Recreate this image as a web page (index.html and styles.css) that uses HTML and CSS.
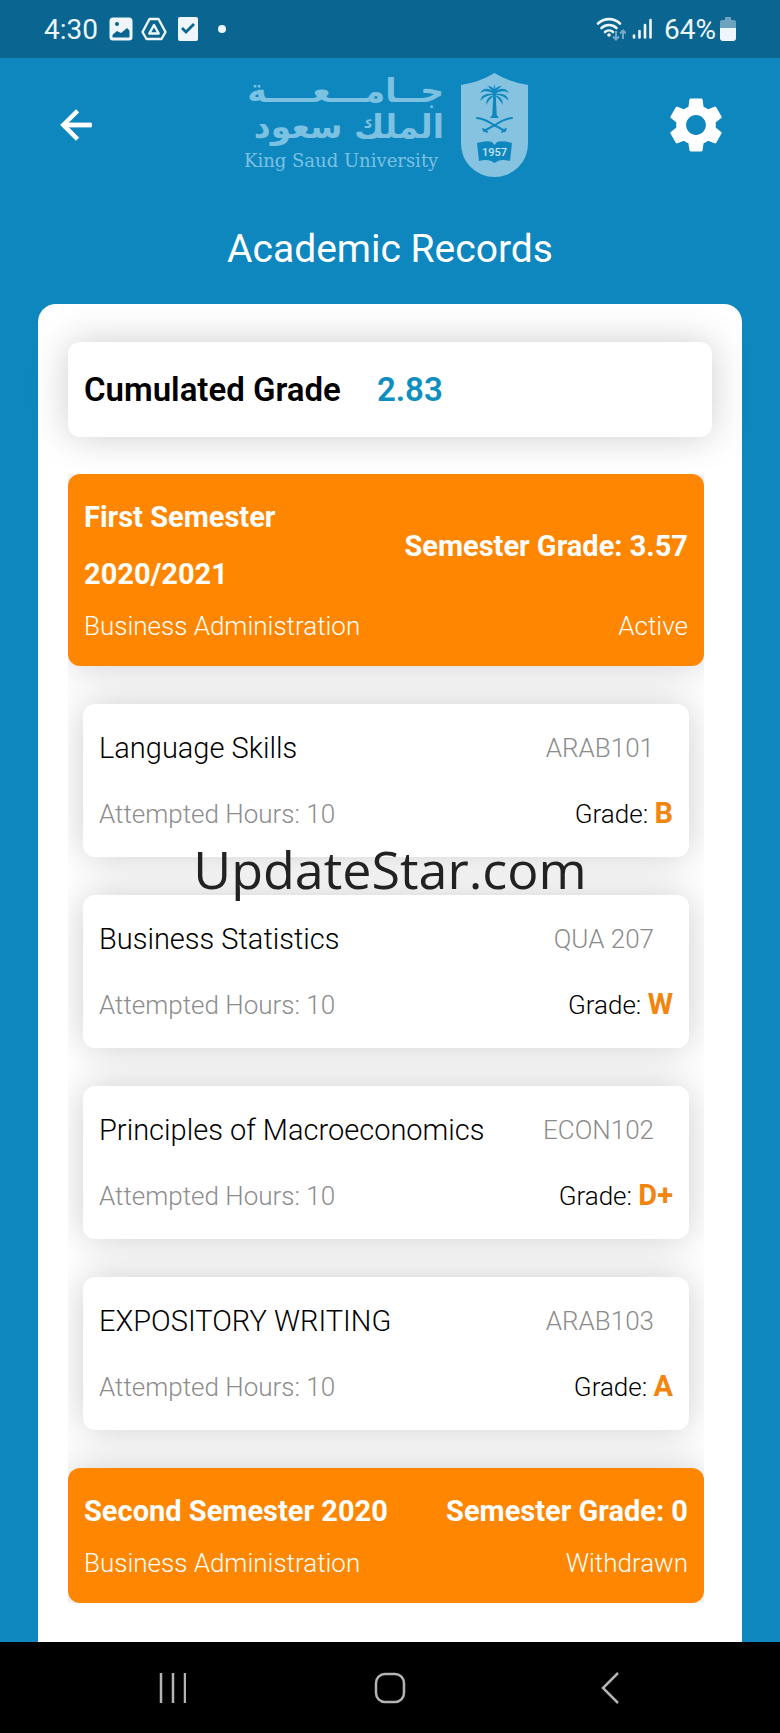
FILE: index.html
```
<!DOCTYPE html>
<html lang="en">
<head>
    <meta charset="UTF-8">
    <meta name="viewport" content="width=device-width, initial-scale=1.0">
    <title>Academic Records</title>
    <link rel="stylesheet" href="styles.css">
</head>
<body>
    <div class="status-bar">
        <div class="status-group">
            <span class="status-text">4:30</span>
            <svg class="icon-image" viewBox="0 0 24 24" width="24" height="24">
                <rect x="2" y="2" width="20" height="20" rx="2" fill="none" stroke="#eef6fb" stroke-width="3"/>
                <path fill="#eef6fb" fill-rule="evenodd" d="M2 2h20v13l-4-4-6 5-4-2-6 5zM8 5a2 2 0 1 0 .01 0z"/>
            </svg>
            <svg class="icon-drive" viewBox="0 0 26 24" width="26" height="24">
                <path fill="none" stroke="#eef6fb" stroke-width="2.4" stroke-linejoin="round" d="M8.500 2h9L24.500 15l-4 7h-15l-4-7z"/>
                <path fill="none" stroke="#eef6fb" stroke-width="2.4" stroke-linejoin="round" d="M13 8l4.700 8.500H8.300z"/>
            </svg>
            <svg class="icon-check" viewBox="0 0 20 24" width="20" height="24">
                <rect width="20" height="24" rx="2" fill="#eef6fb"/>
                <path fill="none" stroke="#0a6690" stroke-width="2.800" d="M4 11l4 4 8-8"/>
            </svg>
            <span class="status-dot"></span>
        </div>
        <div class="status-group">
            <svg viewBox="0 0 30 24" width="30" height="24">
                <g fill="none" stroke="#eef6fb" stroke-width="2.600" stroke-linecap="round">
                    <path d="M2 6.500a16 16 0 0 1 22 0"/>
                    <path d="M5.500 11a11 11 0 0 1 15 0"/>
                    <path d="M9 15a6 6 0 0 1 8 0"/>
                </g>
                <circle cx="13" cy="18" r="1.800" fill="#eef6fb"/>
                <path fill="none" stroke="#73a9c6" stroke-width="2" d="M20 14v8M17 19.500l3 3 3-3M27 22v-8M24 16.500l3-3 3 3"/>
            </svg>
            <svg class="icon-signal" viewBox="0 0 20 24" width="20" height="24">
                <path stroke="#eef6fb" stroke-width="2.600" stroke-linecap="round" d="M2 18.500v2M7.500 14v6.500M13 8v12.500M18.500 3v17.500"/>
            </svg>
            <span class="status-text">64%</span>
            <svg class="icon-battery" viewBox="0 0 16 24" width="16" height="24">
                <path fill="#6ea3c0" d="M5 0h6v3h3a2 2 0 0 1 2 2v7H0V5a2 2 0 0 1 2-2h3z"/>
                <path fill="#eef6fb" d="M0 11h16v10a3 3 0 0 1-3 3H3a3 3 0 0 1-3-3z"/>
            </svg>
        </div>
    </div>

    <header class="header">
        <button class="icon-button" aria-label="Back">
            <svg viewBox="0 0 24 24" width="46" height="46">
                <path fill="#fff" stroke="#fff" stroke-width=".5" d="M20 11H7.830l5.590-5.590L12 4l-8 8 8 8 1.410-1.410L7.830 13H20v-2z"/>
            </svg>
        </button>
        <div class="logo">
            <div class="logo-text">
                <span class="logo-arabic" lang="ar" dir="rtl">جــامـــعــــة</span>
                <span class="logo-arabic" lang="ar" dir="rtl">الملك سعود</span>
                <span class="logo-english">King Saud University</span>
            </div>
            <svg class="crest" viewBox="0 0 67 104" width="67" height="104">
                <path fill="#86c3e0" d="M33.500 0Q48 9 67 12V71a33.500 33 0 0 1-67 0V12Q19 9 33.500 0z"/>
                <g fill="#0e87bf">
                    <path d="M32.300 20h2.400l1 22 2.300 3h-9l2.300-3z"/>
                    <path d="M33.500 20C28 14 22 15 19 20c5-3 9-2 14.500 1C27 20 20 21 19.500 28c4-5 8-6 14-6-5 1-9 4-8 10 2-5 5-7 8-10 3 3 6 5 8 10 1-6-3-9-8-10 6 0 10 1 14 6C47 21 40 20 33.500 21c5.500-3 9.500-4 14.500-1-3-5-9-6-14.500 0z"/>
                    <path d="M33.500 21c-3-4-5-7-8-8 4 0 6 1 7 3l1-5 1 5c1-2 3-3 7-3-3 1-5 4-8 8z"/>
                    <path d="M16 70q10-3 15-1l2.500 3 2.500-3q6-2 15 1l-2 18q-8-2-12 0l-3.500 2-3.500-2q-5-2-12 0z"/>
                </g>
                <g fill="none" stroke="#0e87bf" stroke-width="2" stroke-linecap="round">
                    <path d="M16 45q8 1 17 7l11 6M51 45q-8 1-17 7l-11 6"/>
                    <path d="M22 56l4 3M45 56l-4 3"/>
                </g>
                <text class="crest-year" x="33.500" y="83" text-anchor="middle">1957</text>
            </svg>
        </div>
        <button class="icon-button" aria-label="Settings">
            <svg viewBox="0 0 24 24" width="66" height="66">
                <path fill="#fff" d="M19.140 12.940c.040-.300.060-.610.060-.940 0-.320-.020-.640-.070-.940l2.030-1.580c.180-.140.230-.410.120-.610l-1.920-3.320c-.120-.220-.370-.290-.590-.220l-2.390.960c-.500-.380-1.030-.700-1.620-.940l-.360-2.540c-.040-.240-.240-.410-.480-.410h-3.840c-.240 0-.430.170-.470.410l-.360 2.540c-.590.240-1.130.570-1.620.940l-2.390-.960c-.220-.080-.470 0-.590.220L2.740 8.870c-.120.210-.080.470.120.610l2.030 1.580c-.050.300-.090.630-.090.940s.020.640.070.940l-2.030 1.580c-.180.140-.230.410-.120.610l1.920 3.320c.120.220.370.290.590.220l2.390-.960c.500.380 1.030.700 1.620.940l.360 2.540c.050.240.240.410.480.410h3.840c.240 0 .440-.170.470-.410l.360-2.540c.590-.240 1.130-.560 1.620-.940l2.390.960c.220.080.470 0 .590-.220l1.920-3.320c.120-.220.070-.470-.120-.610l-2.010-1.580zM12 15.600c-1.980 0-3.600-1.620-3.600-3.600s1.620-3.600 3.600-3.600 3.600 1.620 3.600 3.600-1.620 3.600-3.600 3.600z"/>
            </svg>
        </button>
    </header>

    <h1 class="page-title">Academic Records</h1>

    <main class="panel">
        <section class="cumulated">
            <span>Cumulated Grade</span>
            <span class="cumulated-value">2.83</span>
        </section>

        <div class="records">
            <section class="semester">
                <div class="semester-row semester-main">
                    <h2 class="semester-name">First Semester 2020/2021</h2>
                    <span>Semester Grade: 3.57</span>
                </div>
                <div class="semester-row semester-sub">
                    <span>Business Administration</span>
                    <span>Active</span>
                </div>
            </section>

            <article class="course">
                <div class="course-row">
                    <h3 class="course-name">Language Skills</h3>
                    <span class="course-code">ARAB101</span>
                </div>
                <div class="course-row">
                    <span class="course-hours">Attempted Hours: 10</span>
                    <span class="course-grade">Grade: <b>B</b></span>
                </div>
            </article>

            <article class="course">
                <div class="course-row">
                    <h3 class="course-name">Business Statistics</h3>
                    <span class="course-code">QUA 207</span>
                </div>
                <div class="course-row">
                    <span class="course-hours">Attempted Hours: 10</span>
                    <span class="course-grade">Grade: <b>W</b></span>
                </div>
            </article>

            <article class="course">
                <div class="course-row">
                    <h3 class="course-name">Principles of Macroeconomics</h3>
                    <span class="course-code">ECON102</span>
                </div>
                <div class="course-row">
                    <span class="course-hours">Attempted Hours: 10</span>
                    <span class="course-grade">Grade: <b>D+</b></span>
                </div>
            </article>

            <article class="course">
                <div class="course-row">
                    <h3 class="course-name">EXPOSITORY WRITING</h3>
                    <span class="course-code">ARAB103</span>
                </div>
                <div class="course-row">
                    <span class="course-hours">Attempted Hours: 10</span>
                    <span class="course-grade">Grade: <b>A</b></span>
                </div>
            </article>

            <section class="semester">
                <div class="semester-row semester-main">
                    <h2 class="semester-name">Second Semester 2020</h2>
                    <span>Semester Grade: 0</span>
                </div>
                <div class="semester-row semester-sub">
                    <span>Business Administration</span>
                    <span>Withdrawn</span>
                </div>
            </section>
        </div>
    </main>

    <nav class="nav-bar">
        <button class="nav-button" aria-label="Recent apps">
            <svg viewBox="0 0 32 32" width="32" height="32">
                <path stroke="#b4b4b4" stroke-width="2.500" d="M7 1v30M19 1v30M31 1v30"/>
            </svg>
        </button>
        <button class="nav-button" aria-label="Home">
            <svg viewBox="0 0 32 32" width="32" height="32">
                <rect x="2" y="2" width="28" height="28" rx="9" fill="none" stroke="#b4b4b4" stroke-width="2.500"/>
            </svg>
        </button>
        <button class="nav-button" aria-label="Back">
            <svg viewBox="0 0 32 32" width="32" height="32">
                <path fill="none" stroke="#b4b4b4" stroke-width="2.500" d="M24 1L9 16l15 15"/>
            </svg>
        </button>
    </nav>

    <div class="watermark">UpdateStar.com</div>
</body>
</html>
```
FILE: styles.css
```
* {
    box-sizing: border-box;
}

body {
    font-family: Roboto, "Noto Sans", sans-serif;
    background-color: #0e87bf;
    color: #000;
    margin: 0;
    min-height: 100vh;
    display: flex;
    flex-direction: column;
}

h1, h2, h3 {
    margin: 0;
    font-size: inherit;
    font-weight: inherit;
}

button {
    border: none;
    background: none;
    padding: 0;
    display: flex;
    justify-content: center;
    align-items: center;
    cursor: pointer;
}

/* Status bar */
.status-bar {
    height: 58px;
    padding: 0 44px;
    background-color: #0a6690;
    color: #eef6fb;
    display: flex;
    justify-content: space-between;
    align-items: center;
}

.status-group {
    display: flex;
    align-items: center;
}

.status-text {
    font-size: 28px;
}

.icon-image {
    margin-left: 11px;
}

.icon-drive {
    margin-left: 8px;
}

.icon-check {
    margin-left: 11px;
}

.status-dot {
    width: 8px;
    height: 8px;
    margin-left: 20px;
    border-radius: 50%;
    background-color: #eef6fb;
}

.icon-signal {
    margin: 0 12px 0 6px;
}

.icon-battery {
    margin-left: 4px;
}

/* Header */
.header {
    padding: 15px 50px 0 42px;
    display: grid;
    grid-template-columns: 1fr auto 1fr;
    align-items: center;
}

.icon-button {
    width: 68px;
    height: 68px;
}

.icon-button:last-child {
    justify-self: end;
}

.logo {
    display: flex;
    gap: 17px;
    color: #7cc1e2;
}

.logo-text {
    width: 200px;
    display: flex;
    flex-direction: column;
    white-space: nowrap;
}

.logo-arabic {
    font-family: "DejaVu Sans", sans-serif;
    font-size: 33px;
    font-weight: 700;
    line-height: 36px;
}

.logo-english {
    font-family: "DejaVu Serif", serif;
    font-size: 18px;
    line-height: 32px;
}

.crest-year {
    font-family: Roboto, sans-serif;
    font-size: 11px;
    font-weight: 500;
    fill: #cbe6f3;
}

.page-title {
    margin: 44px 0 27px;
    font-size: 39px;
    line-height: 56px;
    text-align: center;
    color: #fff;
}

/* White panel */
.panel {
    flex: 1;
    margin: 0 38px;
    padding: 38px 30px;
    border-radius: 18px 18px 0 0;
    background-color: #fff;
}

.cumulated {
    height: 95px;
    padding: 0 16px;
    border-radius: 12px;
    box-shadow: 0 0 38px rgba(0, 0, 0, 0.2);
    display: flex;
    align-items: center;
    gap: 36px;
    font-size: 33px;
    font-weight: 600;
}

.cumulated-value {
    color: #0e8fc0;
}

.records {
    margin: 37px 8px 0 0;
    overflow: hidden;
    display: flex;
    flex-direction: column;
    gap: 38px;
}

.semester {
    padding: 15px 16px 19px;
    border-radius: 12px;
    background-color: #ff8600;
    box-shadow: 0 0 38px rgba(0, 0, 0, 0.2);
    color: #fff;
}

.semester-row {
    display: flex;
    justify-content: space-between;
    align-items: center;
}

.semester-main {
    gap: 24px;
    font-size: 29px;
    font-weight: 700;
    line-height: 57px;
    white-space: nowrap;
}

.semester-name {
    white-space: normal;
}

.semester-sub {
    margin-top: 2px;
    font-size: 26px;
    font-weight: 300;
    line-height: 42px;
}

.course {
    margin: 0 15px;
    padding: 16px 16px 15px;
    border-radius: 12px;
    background-color: #fff;
    box-shadow: 0 0 38px rgba(0, 0, 0, 0.2);
    font-size: 26px;
    font-weight: 300;
}

.course-row {
    display: flex;
    justify-content: space-between;
    align-items: center;
    line-height: 56px;
}

.course-row + .course-row {
    margin-top: 9px;
}

.course-name {
    font-size: 29px;
}

.course-code {
    margin-right: 19px;
    color: #8c8c8c;
}

.course-hours {
    color: #8c8c8c;
}

.course-grade b {
    font-size: 29px;
    font-weight: 700;
    color: #f08510;
}

/* Navigation bar */
.nav-bar {
    height: 91px;
    padding: 0 154px;
    background-color: #000;
    display: flex;
    justify-content: space-between;
    align-items: center;
}

.watermark {
    position: fixed;
    inset: 0;
    padding-top: 4px;
    display: grid;
    place-items: center;
    font-family: "Open Sans", sans-serif;
    font-size: 52px;
    color: #222;
    pointer-events: none;
}
```
